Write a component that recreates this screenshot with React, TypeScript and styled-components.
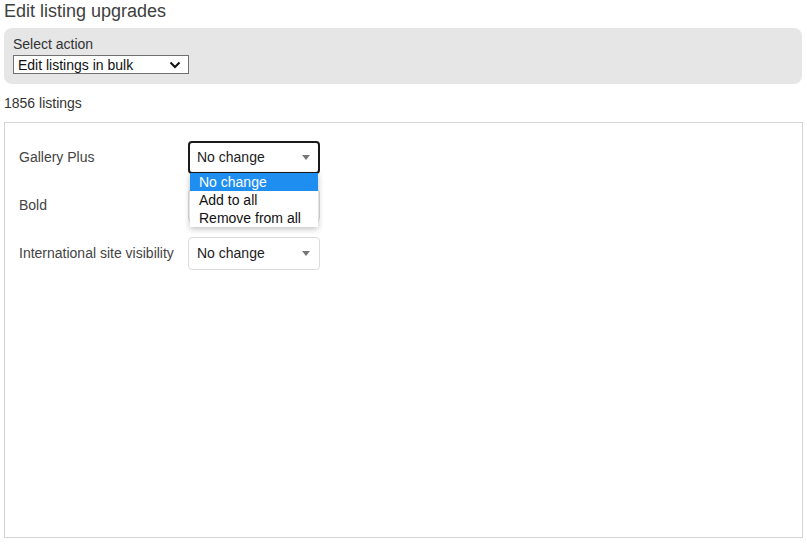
import React from "react";
import styled, { createGlobalStyle } from "styled-components";

const GlobalStyle = createGlobalStyle`
  html, body {
    margin: 0;
    padding: 0;
    background: #ffffff;
    font-family: "Liberation Sans", Arial, sans-serif;
    color: #333333;
  }
`;

const Page = styled.div`
  width: 807px;
  height: 545px;
  box-sizing: border-box;
  padding: 0 5px 0 4px;
  display: flex;
  flex-direction: column;
`;

const Title = styled.h1`
  margin: 0;
  font-size: 18px;
  font-weight: normal;
  line-height: 23px;
  color: #404040;
`;

const ActionBox = styled.div`
  margin-top: 5px;
  height: 56px;
  box-sizing: border-box;
  padding: 8px 9px 0;
  background: #e6e6e6;
  border-radius: 8px;
  display: flex;
  flex-direction: column;
  align-items: flex-start;
`;

const ActionLabel = styled.div`
  font-size: 14px;
  line-height: 16px;
  color: #333;
`;

const NativeSelect = styled.div`
  margin-top: 3px;
  width: 176px;
  height: 19px;
  box-sizing: border-box;
  border: 1px solid #707070;
  background: #fff;
  display: flex;
  align-items: center;
  justify-content: space-between;
  padding: 0 7px 0 4px;
  font-size: 14px;
  color: #111;
`;

const Count = styled.div`
  margin-top: 11px;
  font-size: 14px;
  line-height: 16px;
  color: #333;
`;

const Panel = styled.div`
  margin-top: 11px;
  width: 799px;
  height: 416px;
  box-sizing: border-box;
  border: 1px solid #d4d4d4;
  padding: 18px 14px;
  display: flex;
  flex-direction: column;
  gap: 16px;
`;

const Row = styled.div`
  display: flex;
  align-items: center;
  height: 32px;
`;

const Label = styled.div`
  width: 169px;
  font-size: 14px;
  color: #444;
`;

const Field = styled.div`
  position: relative;
`;

const Trigger = styled.div<{ $focused?: boolean }>`
  width: 132px;
  height: 33px;
  box-sizing: border-box;
  border: ${(p) => (p.$focused ? "2px solid #1a1a1a" : "1px solid #dcdcdc")};
  border-radius: 4px;
  background: #fff;
  display: flex;
  align-items: center;
  justify-content: space-between;
  padding: ${(p) => (p.$focused ? "0 8px 0 7px" : "0 9px 0 8px")};
  font-size: 14px;
  color: #222;
`;

const Caret = styled.span`
  width: 0;
  height: 0;
  border-left: 4.5px solid transparent;
  border-right: 4.5px solid transparent;
  border-top: 5px solid #777;
  margin-top: 1px;
`;

const Menu = styled.ul`
  position: absolute;
  left: 2px;
  top: 32px;
  width: 128px;
  margin: 0;
  padding: 0;
  list-style: none;
  background: #fff;
  box-shadow: 0 2px 6px rgba(0, 0, 0, 0.25);
  z-index: 5;
`;

const Option = styled.li<{ $active?: boolean }>`
  height: 18px;
  line-height: 18px;
  padding-left: 9px;
  font-size: 14px;
  color: ${(p) => (p.$active ? "#fff" : "#111")};
  background: ${(p) => (p.$active ? "#1e8ff0" : "#fff")};
`;

const Chevron = () => (
  <svg width="12" height="8" viewBox="0 0 12 8">
    <path d="M1.5 1.5 L6 6 L10.5 1.5" fill="none" stroke="#111" strokeWidth="2" />
  </svg>
);

const options = ["No change", "Add to all", "Remove from all"];

const rows = [
  { label: "Gallery Plus", open: true },
  { label: "Bold", open: false },
  { label: "International site visibility", open: false },
];

export default function App() {
  return (
    <>
      <GlobalStyle />
      <Page>
        <Title>Edit listing upgrades</Title>
        <ActionBox>
          <ActionLabel>Select action</ActionLabel>
          <NativeSelect>
            <span>Edit listings in bulk</span>
            <Chevron />
          </NativeSelect>
        </ActionBox>
        <Count>1856 listings</Count>
        <Panel>
          {rows.map((r, i) => (
            <Row key={r.label}>
              <Label>{r.label}</Label>
              <Field>
                <Trigger $focused={r.open}>
                  <span>{i === 1 ? "" : "No change"}</span>
                  <Caret />
                </Trigger>
                {r.open && (
                  <Menu>
                    {options.map((o, j) => (
                      <Option key={o} $active={j === 0}>
                        {o}
                      </Option>
                    ))}
                  </Menu>
                )}
              </Field>
            </Row>
          ))}
        </Panel>
      </Page>
    </>
  );
}
